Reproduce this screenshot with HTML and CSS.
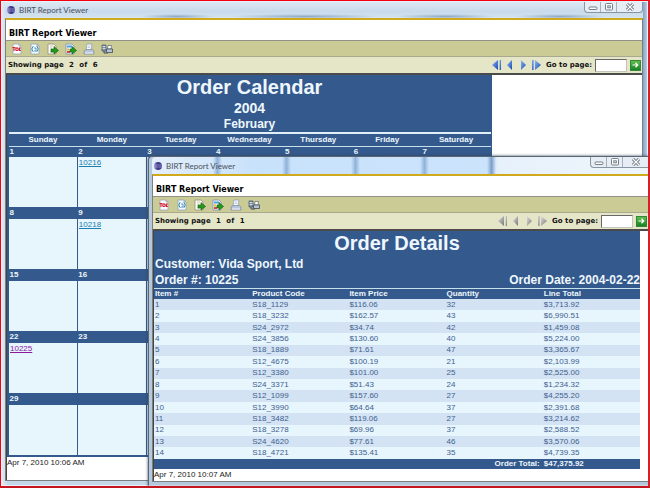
FILE: index.html
```html
<!DOCTYPE html>
<html lang="en">
<head>
<meta charset="utf-8">
<title>BIRT Report Viewer</title>
<link rel="stylesheet" href="styles.css">
</head>
<body>
<svg class="defs" aria-hidden="true">
  <defs>
    <linearGradient id="blueFill" x1="0" y1="0" x2="1" y2="1"><stop offset="0" stop-color="#8fb9f2"/><stop offset="1" stop-color="#1647b4"/></linearGradient>
    <linearGradient id="grayFill" x1="0" y1="0" x2="1" y2="1"><stop offset="0" stop-color="#dedede"/><stop offset="1" stop-color="#777"/></linearGradient>
    <linearGradient id="orbFill" x1="0" y1="0" x2="1" y2="0"><stop offset="0" stop-color="#8e8ad6"/><stop offset=".5" stop-color="#39307e"/><stop offset="1" stop-color="#4b4796"/></linearGradient>
  </defs>
  <symbol id="orb" viewBox="0 0 10 10"><circle cx="5" cy="5" r="4" fill="url(#orbFill)"/><path d="M1 4h8M1 6h8" stroke="#c5c5ee" stroke-width=".5"/></symbol>
  <symbol id="toc" viewBox="0 0 12 12"><path d="M2 1h6l2 2v8H2z" fill="#fafcff" stroke="#9ca6b5" stroke-width=".8"/><path d="M8 1v2h2" fill="none" stroke="#9ca6b5" stroke-width=".8"/><path d="M1.500 4.500h3M3 4.500v3.500M9.800 5h-1.300v2.500h1.300" fill="none" stroke="#d02030" stroke-width="1.100"/><circle cx="6" cy="6.200" r="1.300" fill="none" stroke="#d02030" stroke-width="1.100"/></symbol>
  <symbol id="params" viewBox="0 0 12 12"><path d="M2 1h6l2 2v8H2z" fill="#f4faff" stroke="#91a3b5" stroke-width=".8"/><path d="M8 1v2h2" fill="none" stroke="#91a3b5" stroke-width=".8"/><path d="M4.500 3.500q-1.500 0-1 1.500l-1 1 1 1q-.5 1.500 1 1.500M7.500 3.500q1.500 0 1 1.500l1 1-1 1q.5 1.500-1 1.500" fill="none" stroke="#2e8ca8"/><path d="M5 5h2v3H5" fill="none" stroke="#3a78c0" stroke-width=".8"/></symbol>
  <symbol id="exportData" viewBox="0 0 12 12"><path d="M1 1h6l2 2v8H1z" fill="#fbfbf3" stroke="#94927f" stroke-width=".8"/><path d="M3 3h3M3 5h2M3 9h3" stroke="#b8b69b" stroke-width=".7"/><path d="M4 6h3V3.500L11.500 7.500 7 11V9H4z" fill="#249a1c" stroke="#13570f" stroke-width=".6"/></symbol>
  <symbol id="exportReport" viewBox="0 0 12 12"><path d="M1 1h6l2 2v8H1z" fill="#eff6ff" stroke="#7d91ab" stroke-width=".8"/><path d="M2 2.500h5v2H2z" fill="#53a2da"/><path d="M2 5.500h2v2H2z" fill="#f0b72d"/><path d="M2 8h3v2H2z" fill="#d84545"/><path d="M5 6h2V3.500L11.500 7.500 7 11V9H5z" fill="#249a1c" stroke="#13570f" stroke-width=".6"/></symbol>
  <symbol id="print" viewBox="0 0 12 12"><path d="M4 1h5L8 7H3z" fill="#f8fbff" stroke="#8b99ad" stroke-width=".7"/><path d="M1 8l2-1.500h6.500L11 8v3H1z" fill="#b9c6d9" stroke="#7c8ba3" stroke-width=".7"/><path d="M2 10h8" stroke="#f5f7fb"/><path d="M5 3h2.500M4.500 4.500H7" stroke="#9bb5d8" stroke-width=".6"/></symbol>
  <symbol id="printServer" viewBox="0 0 12 12"><path d="M1 2h4v6H1z" fill="#8795a8" stroke="#3d4d65" stroke-width=".7"/><path d="M1.500 3.500h3M1.500 5.500h3" stroke="#e3eaf2" stroke-width=".8"/><path d="M3 8v2h4" fill="none" stroke="#3d4d65"/><path d="M7 2.500h3.500L10 6H6.500z" fill="#fff" stroke="#586779" stroke-width=".7"/><path d="M5.500 6h6v3.500h-6z" fill="#b8c4d4" stroke="#3f4a59" stroke-width=".8"/></symbol>
  <symbol id="first" viewBox="0 0 10 10"><path d="M6 0v10L0 5z"/><path d="M7.500 0H9v10H7.500z"/></symbol>
  <symbol id="prev" viewBox="0 0 10 10"><path d="M7 0v10L2 5z"/></symbol>
  <symbol id="next" viewBox="0 0 10 10"><path d="M3 0v10l5-5z"/></symbol>
  <symbol id="last" viewBox="0 0 10 10"><path d="M4 0v10l6-5z"/><path d="M1 0h1.500v10H1z"/></symbol>
  <symbol id="go" viewBox="0 0 12 12"><path d="M2 6h6M6 3l3 3-3 3" fill="none" stroke="#fff" stroke-width="1.600"/></symbol>
  <symbol id="min" viewBox="0 0 12 10"><rect x="2" y="5" width="8" height="2.500" rx="1" fill="#fff" stroke="#66707c" stroke-width=".9"/></symbol>
  <symbol id="max" viewBox="0 0 12 10"><rect x="2.500" y="1.500" width="7" height="6.500" rx="1" fill="#fff" stroke="#66707c" stroke-width=".9"/><rect x="4.800" y="3.800" width="2.500" height="2" fill="none" stroke="#66707c" stroke-width=".9"/></symbol>
  <symbol id="close" viewBox="0 0 12 10"><path d="M3 2l6 6M9 2L3 8" stroke="#5d6672" stroke-width="3"/><path d="M3 2l6 6M9 2L3 8" stroke="#fff" stroke-width="1.300"/></symbol>
</svg>

<main class="desktop">
  <section class="window calendar-window">
    <header class="titlebar">
      <svg class="orb"><use href="#orb"/></svg><span>BIRT Report Viewer</span>
      <div class="controls">
        <button aria-label="Minimize"><svg><use href="#min"/></svg></button><button aria-label="Maximize"><svg><use href="#max"/></svg></button><button class="close" aria-label="Close"><svg><use href="#close"/></svg></button>
      </div>
    </header>
    <div class="client">
      <h1 class="app-title">BIRT Report Viewer</h1>
      <div class="toolbar">
        <button aria-label="Table of contents"><svg><use href="#toc"/></svg></button>
        <button aria-label="Parameters"><svg><use href="#params"/></svg></button>
        <button aria-label="Export data"><svg><use href="#exportData"/></svg></button>
        <button aria-label="Export report"><svg><use href="#exportReport"/></svg></button>
        <button aria-label="Print"><svg><use href="#print"/></svg></button>
        <button aria-label="Print on server"><svg><use href="#printServer"/></svg></button>
      </div>
      <div class="navbar">
        <p class="pages">Showing page <b>2</b> of <b>6</b></p>
        <button aria-label="First page"><svg><use href="#first"/></svg></button>
        <button aria-label="Previous page"><svg><use href="#prev"/></svg></button>
        <button aria-label="Next page"><svg><use href="#next"/></svg></button>
        <button aria-label="Last page"><svg><use href="#last"/></svg></button>
        <label for="page1">Go to page:</label>
        <input id="page1" type="text">
        <button class="go" aria-label="Go"><svg><use href="#go"/></svg></button>
      </div>
      <div class="report">
        <div class="calendar">
          <h2>Order Calendar</h2>
          <h3 class="year">2004</h3>
          <h3 class="month">February</h3>
          <table>
            <thead><tr><th>Sunday</th><th>Monday</th><th>Tuesday</th><th>Wednesday</th><th>Thursday</th><th>Friday</th><th>Saturday</th></tr></thead>
            <tbody>
              <tr class="dates"><td>1</td><td>2</td><td>3</td><td>4</td><td>5</td><td>6</td><td>7</td></tr>
              <tr class="orders"><td></td><td><a href="#o10216">10216</a></td><td></td><td></td><td></td><td></td><td></td></tr>
              <tr class="dates"><td>8</td><td>9</td><td></td><td></td><td></td><td></td><td></td></tr>
              <tr class="orders"><td></td><td><a href="#o10218">10218</a></td><td></td><td></td><td></td><td></td><td></td></tr>
              <tr class="dates"><td>15</td><td>16</td><td></td><td></td><td></td><td></td><td></td></tr>
              <tr class="orders"><td></td><td></td><td></td><td></td><td></td><td></td><td></td></tr>
              <tr class="dates"><td>22</td><td>23</td><td></td><td></td><td></td><td></td><td></td></tr>
              <tr class="orders"><td><a class="visited" href="#o10225">10225</a></td><td></td><td></td><td></td><td></td><td></td><td></td></tr>
              <tr class="dates"><td>29</td><td></td><td></td><td></td><td></td><td></td><td></td></tr>
              <tr class="orders"><td></td><td></td><td></td><td></td><td></td><td></td><td></td></tr>
            </tbody>
          </table>
        </div>
        <p class="stamp">Apr 7, 2010 10:06 AM</p>
      </div>
    </div>
  </section>

  <section class="window details-window">
    <header class="titlebar">
      <svg class="orb"><use href="#orb"/></svg><span>BIRT Report Viewer</span>
      <div class="controls">
        <button aria-label="Minimize"><svg><use href="#min"/></svg></button><button aria-label="Maximize"><svg><use href="#max"/></svg></button><button class="close" aria-label="Close"><svg><use href="#close"/></svg></button>
      </div>
    </header>
    <div class="client">
      <h1 class="app-title">BIRT Report Viewer</h1>
      <div class="toolbar">
        <button aria-label="Table of contents"><svg><use href="#toc"/></svg></button>
        <button aria-label="Parameters"><svg><use href="#params"/></svg></button>
        <button aria-label="Export data"><svg><use href="#exportData"/></svg></button>
        <button aria-label="Export report"><svg><use href="#exportReport"/></svg></button>
        <button aria-label="Print"><svg><use href="#print"/></svg></button>
        <button aria-label="Print on server"><svg><use href="#printServer"/></svg></button>
      </div>
      <div class="navbar inactive">
        <p class="pages">Showing page <b>1</b> of <b>1</b></p>
        <button aria-label="First page"><svg><use href="#first"/></svg></button>
        <button aria-label="Previous page"><svg><use href="#prev"/></svg></button>
        <button aria-label="Next page"><svg><use href="#next"/></svg></button>
        <button aria-label="Last page"><svg><use href="#last"/></svg></button>
        <label for="page2">Go to page:</label>
        <input id="page2" type="text">
        <button class="go" aria-label="Go"><svg><use href="#go"/></svg></button>
      </div>
      <div class="report">
        <div class="details">
          <h2>Order Details</h2>
          <div class="order-head"><p>Customer: Vida Sport, Ltd</p></div>
          <div class="order-head"><p>Order #: 10225</p><p>Order Date: 2004-02-22</p></div>
          <table>
            <thead><tr><th class="item">Item #</th><th class="code">Product Code</th><th class="price">Item Price</th><th class="qty">Quantity</th><th>Line Total</th></tr></thead>
            <tbody>
              <tr><td>1</td><td>S18_1129</td><td>$116.06</td><td>32</td><td>$3,713.92</td></tr>
              <tr><td>2</td><td>S18_3232</td><td>$162.57</td><td>43</td><td>$6,990.51</td></tr>
              <tr><td>3</td><td>S24_2972</td><td>$34.74</td><td>42</td><td>$1,459.08</td></tr>
              <tr><td>4</td><td>S24_3856</td><td>$130.60</td><td>40</td><td>$5,224.00</td></tr>
              <tr><td>5</td><td>S18_1889</td><td>$71.61</td><td>47</td><td>$3,365.67</td></tr>
              <tr><td>6</td><td>S12_4675</td><td>$100.19</td><td>21</td><td>$2,103.99</td></tr>
              <tr><td>7</td><td>S12_3380</td><td>$101.00</td><td>25</td><td>$2,525.00</td></tr>
              <tr><td>8</td><td>S24_3371</td><td>$51.43</td><td>24</td><td>$1,234.32</td></tr>
              <tr><td>9</td><td>S12_1099</td><td>$157.60</td><td>27</td><td>$4,255.20</td></tr>
              <tr><td>10</td><td>S12_3990</td><td>$64.64</td><td>37</td><td>$2,391.68</td></tr>
              <tr><td>11</td><td>S18_3482</td><td>$119.06</td><td>27</td><td>$3,214.62</td></tr>
              <tr><td>12</td><td>S18_3278</td><td>$69.96</td><td>37</td><td>$2,588.52</td></tr>
              <tr><td>13</td><td>S24_4620</td><td>$77.61</td><td>46</td><td>$3,570.06</td></tr>
              <tr><td>14</td><td>S18_4721</td><td>$135.41</td><td>35</td><td>$4,739.35</td></tr>
            </tbody>
            <tfoot><tr><th colspan="4">Order Total:</th><th>$47,375.92</th></tr></tfoot>
          </table>
        </div>
        <p class="stamp">Apr 7, 2010 10:07 AM</p>
      </div>
    </div>
  </section>
</main>
</body>
</html>
```
FILE: styles.css
```css
* { box-sizing: border-box; margin: 0; padding: 0; }

body { font: 8px "Liberation Sans", Arial, sans-serif; color: #222; }
button { border: 0; background: none; display: flex; }
.defs { position: absolute; width: 0; height: 0; }

.desktop {
  position: relative;
  display: flex;
  min-height: 100vh;
  border: 1px solid #f40010;
  border-right: 2px solid #d5202c;
  border-bottom: 2px solid #c5161f;
  overflow: hidden;
}

/* Window frame */
.window {
  display: flex;
  flex-direction: column;
  flex: 1;
  background: #d3e1ee;
  border: 1px solid #e8f1f8;
}
.calendar-window { padding: 0 4px 4px 3px; background: linear-gradient(90deg, #dfe9f1, #c4d7e8 1%, #d5e2ed 98%, #6289b8 99%, #b8cde1); }
.details-window {
  position: absolute;
  top: 155px;
  right: 0;
  bottom: 0;
  left: 147px;
  padding: 0 0 3px 3px;
  border: 1px solid #596775;
  border-right: 0;
  border-bottom-color: #cbd8e4;
  border-radius: 4px 0 0 0;
  background: #b4c9dd;
  box-shadow: 0 0 3px #35465a;
}
.titlebar {
  display: flex;
  align-items: center;
  gap: 3px;
  height: 16px;
  padding-left: 1px;
  font: 8px Lato, "Open Sans", sans-serif;
  color: #4a5058;
}
.calendar-window .titlebar {
  background:
    radial-gradient(closest-side, #8fabc5, transparent) 135px 12px / 74px 5px no-repeat,
    radial-gradient(closest-side, #8fabc5, transparent) 225px 12px / 150px 5px no-repeat,
    radial-gradient(closest-side, #8fabc5, transparent) 390px 12px / 100px 5px no-repeat,
    radial-gradient(closest-side, #8fabc5, transparent) 510px 12px / 90px 5px no-repeat,
    linear-gradient(#dde8f4, #c8daec 60%, #d5e4f0);
}
.details-window .titlebar {
  height: 17px;
  border-radius: 4px 0 0 0;
  background:
    linear-gradient(90deg, transparent, #91b3d8, transparent) 61px 0 / 9px 100% no-repeat,
    linear-gradient(90deg, transparent, #91b3d8, transparent) 130px 0 / 9px 100% no-repeat,
    linear-gradient(90deg, transparent, #91b3d8, transparent) 199px 0 / 9px 100% no-repeat,
    linear-gradient(90deg, transparent, #91b3d8, transparent) 268px 0 / 9px 100% no-repeat,
    linear-gradient(90deg, transparent, #7f9fca, transparent) 335px 0 / 9px 100% no-repeat,
    linear-gradient(90deg, #e4effb, #c9e2fb 20%, #cbe4fc 68%, #e7f1fb 70%, #eef5fb);
}
.orb { width: 10px; height: 10px; }
.controls {
  display: flex;
  align-self: flex-start;
  margin-left: auto;
  border: 1px solid #8995a3;
  border-top: 0;
  border-radius: 0 0 4px 4px;
  background: #e6edf4;
}
.controls button { width: 16px; height: 10px; justify-content: center; border-right: 1px solid #a5b0bc; }
.controls .close { width: 25px; border: 0; }
.controls svg { width: 12px; height: 10px; }
.details-window .controls { border-right: 0; border-radius: 0 0 0 4px; }

/* Viewer chrome */
.client {
  display: flex;
  flex-direction: column;
  flex: 1;
  background: #fff;
  border: 1px solid #7c7f80;
  border-top: 2px solid #d1a91d;
}
.details-window .client { border-right: 0; }
.app-title { height: 20px; padding: 8px 3px 0; font: bold 8px/12px "DejaVu Sans", Verdana, sans-serif; color: #000; }
.toolbar {
  display: flex;
  align-items: center;
  gap: 6px;
  height: 17px;
  padding-left: 5px;
  background: #cbcb95;
  border-top: 1px solid #929288;
  border-bottom: 1px solid #a9a990;
}
.toolbar svg { width: 12px; height: 12px; }
.navbar {
  display: flex;
  align-items: center;
  gap: 3px;
  height: 18px;
  padding: 0 1px 0 2px;
  background: #e5e5c7;
  border-bottom: 2px solid #4b4b4b;
  font: bold 7px "DejaVu Sans", Verdana, sans-serif;
  color: #111;
}
.pages { margin-right: auto; }
.pages b { margin: 0 3px; }
.navbar svg { width: 10px; height: 10px; fill: url(#blueFill); }
.navbar.inactive svg { fill: url(#grayFill); }
.navbar label { margin-left: 2px; }
.navbar input { width: 32px; height: 13px; border: 1px solid #c5c5b8; border-top-color: #686868; border-left-color: #686868; background: #fff; font: inherit; }
.navbar .go { width: 11px; height: 11px; align-items: center; justify-content: center; background: linear-gradient(#5fbf4d, #168326); border: 1px solid #348738; }

/* Reports */
.report { flex: 1; border-left: 1px solid #444; }
.report h2 { font-size: 20px; line-height: 25px; text-align: center; }
.report table { width: 100%; table-layout: fixed; border-collapse: collapse; }
.stamp { line-height: 12px; }

.calendar { margin-right: 150px; padding: 0 1px 2px; background: #34598c; color: #eef7fd; }
.calendar h3 { text-align: center; }
.calendar .year { font-size: 14px; line-height: 17px; }
.calendar .month { font-size: 12px; line-height: 15px; }
.calendar thead th { height: 13px; line-height: 10px; border-top: 2px solid #e1eff8; border-bottom: 1px solid #c6e0ec; }
.dates td { height: 12px; padding-left: 1px; font-weight: bold; line-height: 10px; }
.dates:first-child td { height: 11px; }
.orders td { height: 50px; padding: 1px 1px 0; background: #e7f5fd; border: 1px solid #34598c; border-width: 0 1px; vertical-align: top; line-height: 10px; }
.calendar a { color: #1a7fb0; }
.calendar a.visited { color: #8b1a9c; }

.details { margin-right: 8px; background: #34598c; color: #eef7fd; }
.order-head { display: flex; justify-content: space-between; padding-left: 1px; font-weight: bold; font-size: 12px; line-height: 16px; }
.details table { height: 181px; border-top: 1px solid #c6e0ec; }
.details th, .details td { padding-left: 1px; line-height: 10px; text-align: left; }
.details td { color: #3e608f; }
.details tbody tr { background: #e7f5fd; }
.details tbody tr:nth-child(odd) { background: #d3e3f3; }
.details tfoot th[colspan] { padding-right: 3px; text-align: right; }
.item, .code, .price, .qty { width: 20%; }
```
